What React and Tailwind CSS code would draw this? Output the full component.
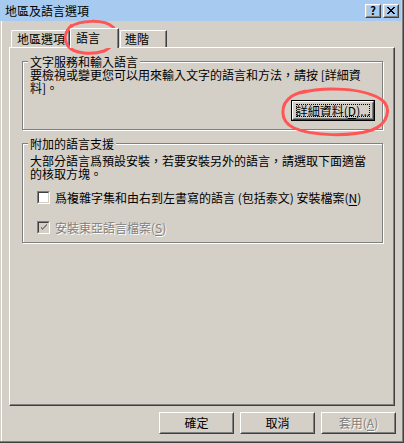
import React from "react";

const font = { fontFamily: '"Noto Sans CJK TC", "Liberation Sans", sans-serif' };

function Raised({ className = "", innerClassName = "", children }) {
  return (
    <div className={`border border-t-white border-l-white border-r-[#404040] border-b-[#404040] ${className}`}>
      <div className={`h-full w-full border border-t-[#d4d0c8] border-l-[#d4d0c8] border-r-[#808080] border-b-[#808080] flex items-center justify-center ${innerClassName}`}>
        {children}
      </div>
    </div>
  );
}

function Key({ children }) {
  return <span className="underline underline-offset-2">{children}</span>;
}

function Checkbox({ checked, disabled }) {
  return (
    <div className="w-[13px] h-[13px] shrink-0 border border-t-[#808080] border-l-[#808080] border-r-white border-b-white">
      <div
        className={`w-full h-full border border-t-[#404040] border-l-[#404040] border-r-[#d4d0c8] border-b-[#d4d0c8] flex items-center justify-center ${
          disabled ? "bg-[#d4d0c8]" : "bg-white"
        }`}
      >
        {checked && (
          <svg width="7" height="7" viewBox="0 0 7 7" shapeRendering="crispEdges">
            <path d="M0 2h1v3h1v1h1v-1h1v-1h1v-1h1v-1h1v-2h-1v1h-1v1h-1v1h-1v1h-1v-1h-1v-1z" fill={disabled ? "#808080" : "#000"} />
          </svg>
        )}
      </div>
    </div>
  );
}

function Group({ title, className = "", children }) {
  return (
    <fieldset
      className={`w-[361px] border border-[#808080] shadow-[1px_1px_0_#fff,inset_1px_1px_0_#fff] ${className}`}
    >
      <legend className="ml-[5px] px-[2px] bg-[#d4d0c8] leading-[13px]">{title}</legend>
      {children}
    </fieldset>
  );
}

export default function App() {
  return (
    <div className="relative w-[404px] h-[443px] bg-[#d4d0c8] border-r border-b border-[#404040] text-[12px] text-black" style={font}>
      <div className="h-full border-r border-b border-[#808080] flex flex-col">
        {/* title bar */}
        <div className="h-[21px] mr-[1px] bg-[#a6caf0] flex items-center pl-[5px] pr-[2px]">
          <span className="flex-1 leading-[13px]">地區及語言選項</span>
          <Raised className="w-[16px] h-[14px]" innerClassName="text-[11px] font-bold leading-none">?</Raised>
          <Raised className="w-[16px] h-[14px] ml-[2px]">
            <svg width="8" height="7" viewBox="0 0 8 7" shapeRendering="crispEdges">
              <path d="M0 0h2v1h1v1h2v-1h1v-1h2v1h-1v1h-1v1h-1v1h1v1h1v1h1v1h-2v-1h-1v-1h-2v1h-1v1h-2v-1h1v-1h1v-1h1v-1h-1v-1h-1v-1h-1z" fill="#000" />
            </svg>
          </Raised>
        </div>

        <div className="flex-1 ml-[1px] border-l border-white pl-[7px] pr-[7px] flex flex-col">
          {/* tabs */}
          <div className="pt-[7px] flex items-end h-[26px] pl-[2px]">
            <div className="w-[59px] h-[17px] border-t border-l border-white border-r border-r-[#404040] rounded-tl-[2px] mb-0">
              <div className="h-full border-r border-[#808080] pl-[5px] leading-[16px]">地區選項</div>
            </div>
            <div className="relative z-10 w-[49px] h-[20px] -mb-[1px] bg-[#d4d0c8] border-t border-l border-white border-r border-r-[#404040] rounded-tl-[2px]">
              <div className="h-full border-r border-[#808080] pl-[5px] pt-[2px] leading-[13px]">語言</div>
            </div>
            <div className="w-[47px] h-[17px] ml-[1px] border-t border-l border-white border-r border-r-[#404040] rounded-tl-[2px]">
              <div className="h-full border-r border-[#808080] pl-[4px] leading-[16px]">進階</div>
            </div>
          </div>

          {/* panel */}
          <div className="h-[359px] border-t border-l border-white border-r border-b border-r-[#404040] border-b-[#404040]">
            <div className="h-full border-r border-b border-[#808080] pt-[7px] pl-[12px]">
              <Group title="文字服務和輸入語言" className="pb-[8px]">
                <p className="pl-[7px] leading-[13px]">
                  要檢視或變更您可以用來輸入文字的語言和方法，請按 [詳細資
                  <br />
                  料]。
                </p>
                <div className="flex justify-end pr-[7px] mt-[6px]">
                  <div className="w-[84px] h-[21px] border border-black">
                    <Raised className="h-full" innerClassName="px-[2px]">
                      <span className="border border-dotted border-black w-full h-[13px] flex items-center justify-center leading-[12px] whitespace-nowrap">
                        詳細資料(<Key>D</Key>)...
                      </span>
                    </Raised>
                  </div>
                </div>
              </Group>

              <Group title="附加的語言支援" className="mt-[7px] pb-[8px]">
                <p className="pl-[7px] pt-[4px] leading-[13px]">
                  大部分語言爲預設安裝，若要安裝另外的語言，請選取下面適當
                  <br />
                  的核取方塊。
                </p>
                <div className="pl-[14px] mt-[11px] flex items-center gap-[5px] h-[13px]">
                  <Checkbox />
                  <span className="leading-[13px] whitespace-nowrap">
                    爲複雜字集和由右到左書寫的語言 (包括泰文) 安裝檔案(<Key>N</Key>)
                  </span>
                </div>
                <div className="pl-[14px] mt-[17px] flex items-center gap-[5px] h-[13px]">
                  <Checkbox checked disabled />
                  <span className="leading-[13px] text-[#808080] [text-shadow:1px_1px_0_#fff]">
                    安裝東亞語言檔案(<Key>S</Key>)
                  </span>
                </div>
              </Group>
            </div>
          </div>

          {/* buttons */}
          <div className="flex justify-end gap-[6px] mt-[6px] -mr-[1px]">
            <Raised className="w-[75px] h-[22px]">確定</Raised>
            <Raised className="w-[75px] h-[22px]">取消</Raised>
            <Raised className="w-[75px] h-[22px]" innerClassName="text-[#808080] [text-shadow:1px_1px_0_#fff]">
              套用(<Key>A</Key>)
            </Raised>
          </div>
        </div>
      </div>

      {/* red annotation marks */}
      <svg className="absolute inset-0 pointer-events-none" width="404" height="443" viewBox="0 0 404 443">
        <path
          d="M70 27 C80 20 104 19 113 27 C119 33 116 46 104 51 C92 55 74 54 68 46 C64 40 64 32 72 25"
          fill="none"
          stroke="#ff5555"
          strokeWidth="3"
          strokeLinejoin="round"
        />
        <path
          d="M300 93 C325 86 365 88 382 100 C392 108 388 124 372 130 C350 137 312 136 294 128 C279 121 280 104 292 96 C296 94 300 92 306 91"
          fill="none"
          stroke="#ff5555"
          strokeWidth="3"
          strokeLinejoin="round"
        />
      </svg>
    </div>
  );
}
